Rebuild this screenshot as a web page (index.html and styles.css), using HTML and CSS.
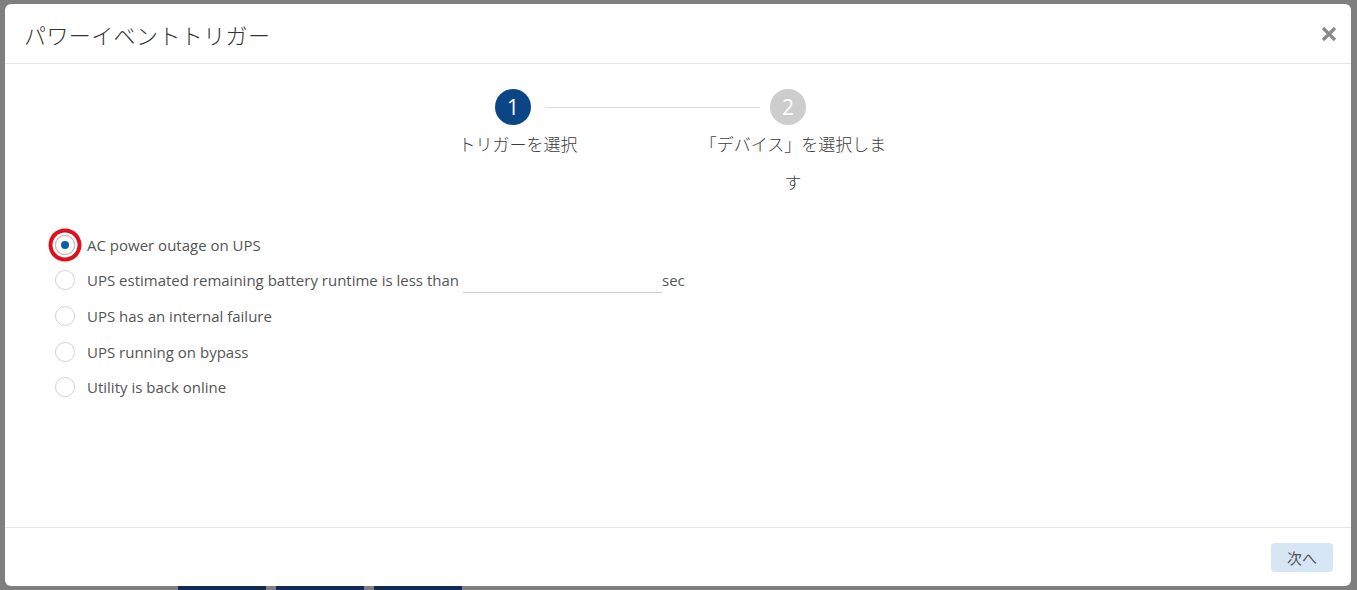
FILE: index.html
```html
<!DOCTYPE html>
<html lang="ja">
<head>
    <meta charset="UTF-8">
    <meta name="viewport" content="width=device-width, initial-scale=1.0">
    <title>パワーイベントトリガー</title>
    <link rel="stylesheet" href="styles.css">
</head>
<body>
    <div class="modal">
        <div class="modal-header">
            <h1 class="modal-title">パワーイベントトリガー</h1>
            <button class="close-btn" aria-label="閉じる">
                <svg width="16" height="16" viewBox="0 0 16 16">
                    <path d="M2 2 L14 14 M14 2 L2 14" stroke="#8a8a8a" stroke-width="3.2" stroke-linecap="butt"/>
                </svg>
            </button>
        </div>

        <div class="modal-body">
            <div class="stepper">
                <div class="step active">
                    <div class="step-circle">1</div>
                    <div class="step-label">トリガーを選択</div>
                </div>
                <div class="step-line"></div>
                <div class="step">
                    <div class="step-circle">2</div>
                    <div class="step-label">「デバイス」を選択します</div>
                </div>
            </div>

            <div class="trigger-list">
                <label class="trigger">
                    <span class="radio checked"></span>
                    <span>AC power outage on UPS</span>
                </label>
                <label class="trigger">
                    <span class="radio"></span>
                    <span>UPS estimated remaining battery runtime is less than</span>
                    <input class="seconds" type="text">
                    <span>sec</span>
                </label>
                <label class="trigger">
                    <span class="radio"></span>
                    <span>UPS has an internal failure</span>
                </label>
                <label class="trigger">
                    <span class="radio"></span>
                    <span>UPS running on bypass</span>
                </label>
                <label class="trigger">
                    <span class="radio"></span>
                    <span>Utility is back online</span>
                </label>
            </div>
        </div>

        <div class="modal-footer">
            <button class="next-btn">次へ</button>
        </div>
    </div>

    <!-- page behind the dialog -->
    <div class="backdrop-row">
        <div class="backdrop-btn"></div>
        <div class="backdrop-btn"></div>
        <div class="backdrop-btn"></div>
    </div>
</body>
</html>
```

FILE: styles.css
```css
body {
    margin: 0;
    padding: 4px 6px 0 5px;
    background-color: #7f7f7f;
    font-family: 'Open Sans', 'Noto Sans CJK JP', sans-serif;
    height: 590px;
    box-sizing: border-box;
    overflow: hidden;
}

.modal {
    height: 582px;
    background: #fff;
    border-radius: 6px;
    display: flex;
    flex-direction: column;
}

.modal-header {
    height: 59px;
    border-bottom: 1px solid #e6e6e6;
    display: flex;
    align-items: center;
    justify-content: space-between;
    padding: 0 14px 0 19px;
}

.modal-title {
    margin: 0;
    font-family: 'Noto Sans CJK JP', sans-serif;
    font-size: 22px;
    font-weight: 300;
    color: #333;
    letter-spacing: 0.4px;
}

.close-btn {
    background: none;
    border: none;
    padding: 0;
    width: 16px;
    height: 16px;
    margin-top: 1px;
    cursor: pointer;
}

.modal-body {
    flex: 1;
    border-bottom: 1px solid #e6e6e6;
}

.stepper {
    display: flex;
    padding: 25px 0 0 406px;
}

.step {
    width: 204px;
    display: flex;
    flex-direction: column;
    align-items: center;
}

.step-circle {
    width: 36px;
    height: 36px;
    border-radius: 50%;
    background-color: #cdcdcd;
    color: #fff;
    font-size: 21px;
    display: flex;
    align-items: center;
    justify-content: center;
}

.step.active .step-circle {
    background-color: #0b4586;
}

.step-label {
    width: 194px;
    padding-left: 10px;
    text-align: center;
    font-family: 'Noto Sans CJK JP', sans-serif;
    font-size: 17px;
    font-weight: 300;
    line-height: 38px;
    color: #3c3c3c;
}

.step-line {
    flex: none;
    width: 215px;
    height: 1px;
    background-color: #dcdcdc;
    margin: 18px -74px 0 -70px;
}

.trigger-list {
    margin-top: 26px;
    padding-left: 50px;
}

.trigger {
    display: flex;
    align-items: center;
    height: 35.6px;
    font-size: 15px;
    color: #555;
}

.radio {
    width: 20px;
    height: 20px;
    box-sizing: border-box;
    border: 1px solid #d2d2d2;
    border-radius: 50%;
    margin-right: 12px;
    display: flex;
    align-items: center;
    justify-content: center;
}

.radio.checked {
    border-color: #b8b8b8;
    box-shadow: 0 0 0 2.5px #fff, 0 0 0 6.5px #dc111c;
}

.radio.checked::after {
    content: "";
    width: 8px;
    height: 8px;
    border-radius: 50%;
    background-color: #0d5ea6;
}

.seconds {
    width: 199px;
    margin: 6px 0 0 4px;
    padding: 0;
    height: 18px;
    border: none;
    border-bottom: 1px solid #cfcfcf;
    outline: none;
}

.modal-footer {
    height: 58px;
    display: flex;
    align-items: center;
    justify-content: flex-end;
    padding-right: 18px;
}

.next-btn {
    width: 62px;
    height: 29px;
    margin-top: 1px;
    border: none;
    border-radius: 4px;
    background-color: #d6e6f4;
    color: #555;
    font-family: 'Noto Sans CJK JP', sans-serif;
    font-size: 15px;
}

.backdrop-row {
    display: flex;
    gap: 10px;
    padding-left: 173px;
}

.backdrop-btn {
    width: 88px;
    height: 10px;
    background-color: #0f2c53;
}
```
